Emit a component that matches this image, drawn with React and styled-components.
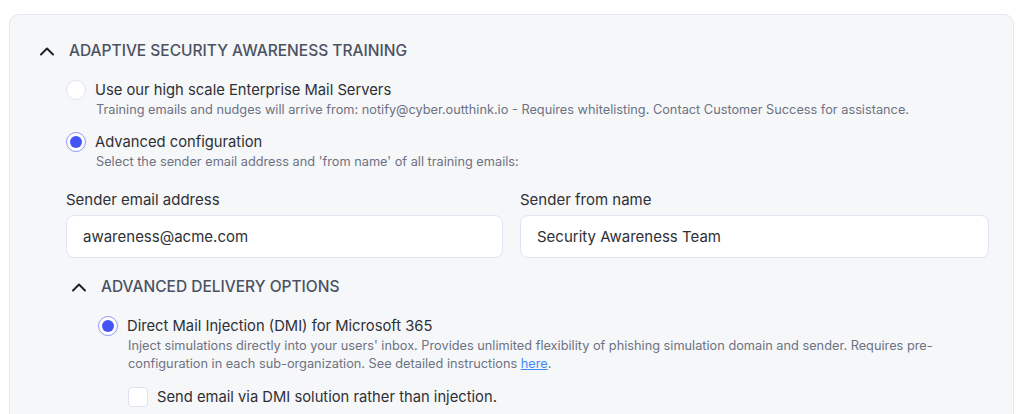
import React from "react";
import styled, { createGlobalStyle } from "styled-components";

const Global = createGlobalStyle`
  html, body { margin: 0; padding: 0; background: #ffffff; }
  body { font-family: "Inter", "Noto Sans", sans-serif; -webkit-font-smoothing: antialiased; }
  #root { height: 414px; overflow: hidden; }
`;

const Panel = styled.section`
  margin: 14px 10px 0 9px;
  border: 1px solid #e3e7f3;
  border-radius: 10px;
  background: #f6f7f9;
  padding: 24px 24px 40px 28px;
  min-height: 420px;
  box-sizing: border-box;
`;

const SectionHeader = styled.div`
  display: flex;
  align-items: center;
  height: 24px;
  gap: ${(p) => p.$gap}px;
  margin-left: ${(p) => p.$indent}px;
  margin-top: ${(p) => p.$top || 0}px;
`;

const Chevron = styled.svg`
  width: 16px;
  height: 16px;
  flex: none;
  color: #1f2126;
`;

const Title = styled.h2`
  margin: 0;
  font-size: 15.5px;
  font-weight: 500;
  letter-spacing: 0;
  color: #4b5263;
  text-transform: uppercase;
  line-height: 24px;
`;

const Options = styled.div`
  display: flex;
  flex-direction: column;
  gap: 12px;
  margin-top: ${(p) => p.$top}px;
  margin-left: ${(p) => p.$indent}px;
`;

const Option = styled.div`
  display: grid;
  grid-template-columns: 20px 1fr;
  column-gap: ${(p) => p.$gap || 9}px;
  align-items: start;
`;

const Radio = styled.span`
  width: 20px;
  height: 20px;
  margin-top: 1px;
  box-sizing: border-box;
  border-radius: 50%;
  background: #ffffff;
  border: ${(p) => (p.$checked ? "1.5px solid #8d97f6" : "1px solid #e1e4f0")};
  display: flex;
  align-items: center;
  justify-content: center;
  &::after {
    content: "";
    display: ${(p) => (p.$checked ? "block" : "none")};
    width: 12px;
    height: 12px;
    border-radius: 50%;
    background: #4254f5;
  }
`;

const Box = styled.span`
  width: 20px;
  height: 20px;
  flex: none;
  box-sizing: border-box;
  border-radius: 4px;
  background: #ffffff;
  border: 1px solid #dfe3f0;
`;

const Texts = styled.div`
  display: flex;
  flex-direction: column;
`;

const Label = styled.span`
  font-size: 14.75px;
  line-height: 22px;
  color: #2e3036;
  font-weight: 400;
`;

const Desc = styled.span`
  font-size: 12.75px;
  line-height: 18px;
  color: #6d7283;
  margin-left: 1px;
`;

const Link = styled.a`
  color: #3d8bf7;
  text-decoration: underline;
`;

const Fields = styled.div`
  display: grid;
  grid-template-columns: 437px 469px;
  column-gap: 17px;
  margin-top: 19px;
  margin-left: 28px;
`;

const Field = styled.div`
  display: flex;
  flex-direction: column;
  gap: 5px;
`;

const FieldLabel = styled.label`
  font-size: 15px;
  line-height: 20px;
  color: #2e3036;
`;

const Input = styled.div`
  height: 43px;
  box-sizing: border-box;
  border: 1px solid #e1e5f2;
  border-radius: 8px;
  background: #ffffff;
  padding: 0 16px;
  display: flex;
  align-items: center;
  font-size: 15px;
  color: #2e3036;
`;

const CheckRow = styled.div`
  display: flex;
  align-items: center;
  gap: 9px;
  margin-top: 13px;
  margin-left: 90px;
`;

const ChevronUp = () => (
  <Chevron viewBox="0 0 16 16" fill="none">
    <path d="M2 11.5 L8 5.5 L14 11.5" stroke="currentColor" strokeWidth="2" strokeLinecap="round" strokeLinejoin="round" />
  </Chevron>
);

export default function App() {
  return (
    <>
      <Global />
      <Panel>
        <SectionHeader $indent={1} $gap={14}>
          <ChevronUp />
          <Title>Adaptive Security Awareness Training</Title>
        </SectionHeader>

        <Options $top={16} $indent={28}>
          <Option>
            <Radio />
            <Texts>
              <Label>Use our high scale Enterprise Mail Servers</Label>
              <Desc>
                Training emails and nudges will arrive from: notify@cyber.outthink.io - Requires whitelisting. Contact Customer Success for assistance.
              </Desc>
            </Texts>
          </Option>
          <Option>
            <Radio $checked />
            <Texts>
              <Label>Advanced configuration</Label>
              <Desc>Select the sender email address and 'from name' of all training emails:</Desc>
            </Texts>
          </Option>
        </Options>

        <Fields>
          <Field>
            <FieldLabel>Sender email address</FieldLabel>
            <Input>awareness@acme.com</Input>
          </Field>
          <Field>
            <FieldLabel>Sender from name</FieldLabel>
            <Input>Security Awareness Team</Input>
          </Field>
        </Fields>

        <SectionHeader $indent={33} $gap={14} $top={17}>
          <ChevronUp />
          <Title>Advanced Delivery Options</Title>
        </SectionHeader>

        <Options $top={16} $indent={60}>
          <Option $gap={9}>
            <Radio $checked />
            <Texts>
              <Label>Direct Mail Injection (DMI) for Microsoft 365</Label>
              <Desc>
                Inject simulations directly into your users' inbox. Provides unlimited flexibility of phishing simulation domain and sender. Requires pre-
                <br />
                configuration in each sub-organization. See detailed instructions <Link href="#">here</Link>.
              </Desc>
            </Texts>
          </Option>
        </Options>

        <CheckRow>
          <Box />
          <Label>Send email via DMI solution rather than injection.</Label>
        </CheckRow>
      </Panel>
    </>
  );
}
